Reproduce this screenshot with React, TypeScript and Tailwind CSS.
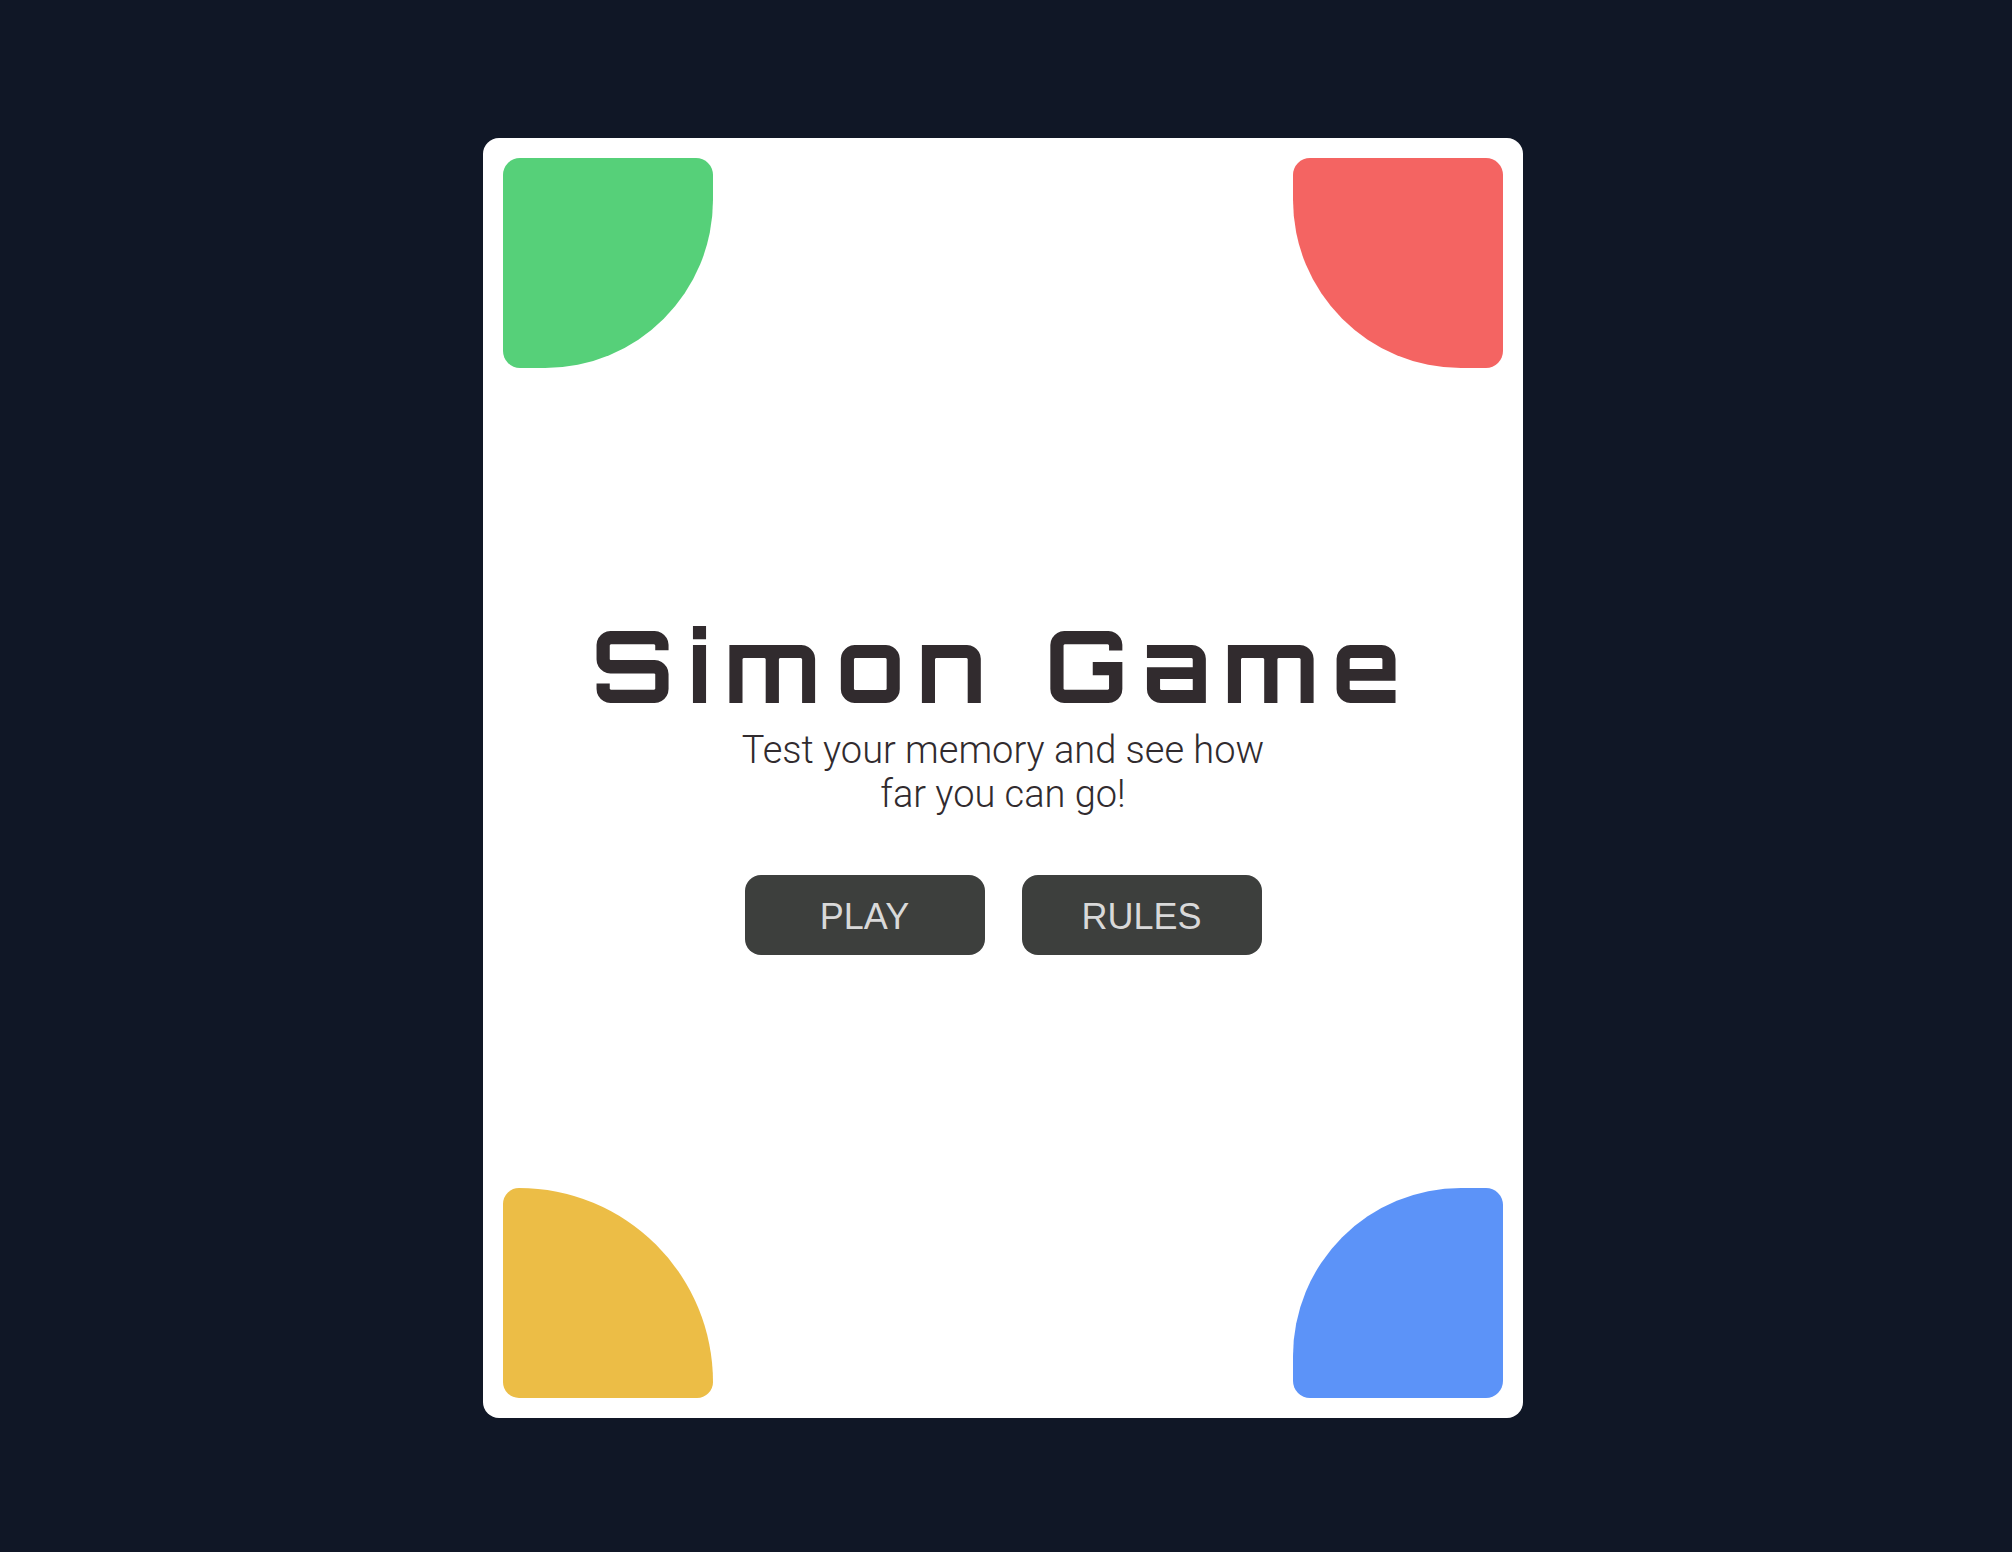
const tileBase = 'block size-[210px] cursor-pointer';

function Tile({ label, className }: { label: string; className: string }) {
  return <button type="button" aria-label={label} className={`${tileBase} ${className}`} />;
}

function MenuButton({ children }: { children: string }) {
  return (
    <button
      type="button"
      className="h-20 w-60 cursor-pointer rounded-2xl bg-[#3d3f3d] pt-1 font-['Liberation_Sans',Arial,sans-serif] text-4xl text-[#d9d9d9]"
    >
      {children}
    </button>
  );
}

export default function App() {
  return (
    <main className="flex min-h-screen items-center justify-center bg-[#101726] pt-1 pr-1.5">
      <section className="flex min-h-[1280px] w-full max-w-[1040px] flex-col justify-between rounded-2xl bg-white p-5">
        <div className="flex justify-between">
          <Tile label="Green" className="rounded-[17px] rounded-br-[168px] bg-[#56d079]" />
          <Tile label="Red" className="rounded-[17px] rounded-bl-[168px] bg-[#f46462]" />
        </div>

        <div className="flex flex-col items-center pt-2 text-center text-[#312b2e]">
          <h1 className="mb-[7px] font-[Orbitron,'DejaVu_Sans',sans-serif] text-[100px] leading-[112px] font-bold tracking-[14px]">
            Simon Game
          </h1>
          <p className="max-w-[560px] font-[Roboto,sans-serif] text-[38px] leading-[44px] font-light">
            Test your memory and see how far you can go!
          </p>
          <div className="mt-[59px] flex gap-[37px]">
            <MenuButton>PLAY</MenuButton>
            <MenuButton>RULES</MenuButton>
          </div>
        </div>

        <div className="flex justify-between">
          <Tile label="Yellow" className="rounded-2xl rounded-tr-[194px] bg-[#ecbd46]" />
          <Tile label="Blue" className="rounded-[17px] rounded-tl-[168px] bg-[#5c93f8]" />
        </div>
      </section>
    </main>
  );
}
